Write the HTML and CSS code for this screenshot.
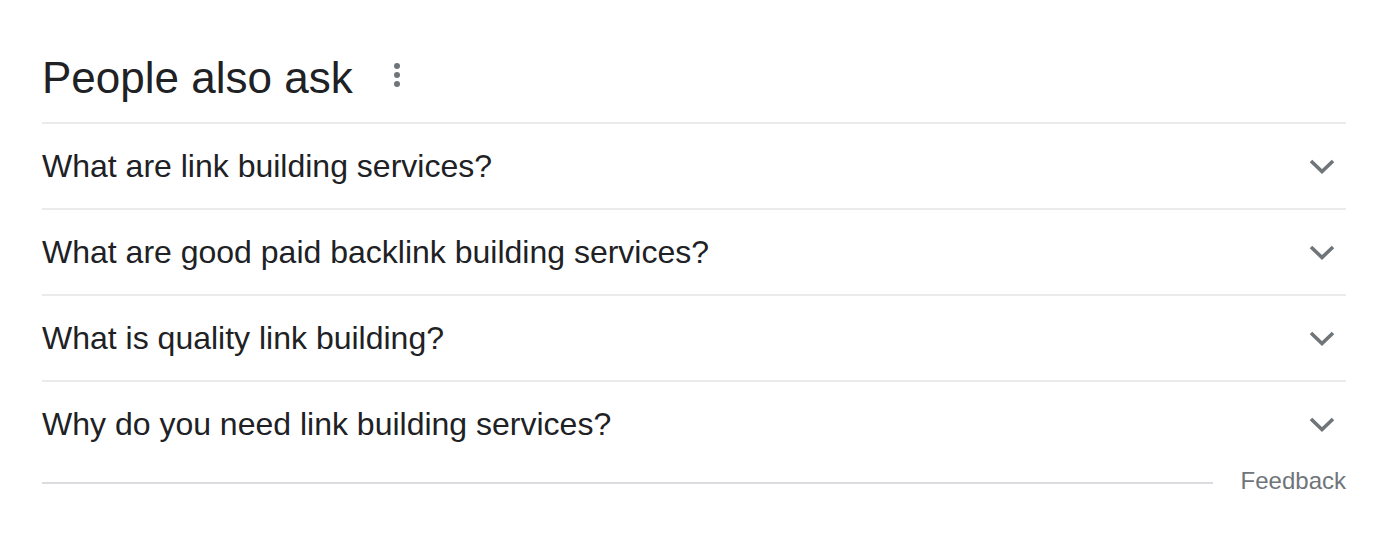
FILE: index.html
```html
<!DOCTYPE html>
<html>
<head>
<meta charset="utf-8">
<link rel="stylesheet" href="styles.css">
</head>
<body>
<div class="paa">
  <div class="paa-head">
    <h2 class="paa-title">People also ask</h2>
    <span class="paa-more" aria-label="More options">
      <svg width="12" height="30" viewBox="0 0 12 30"><circle cx="6" cy="5" r="3"/><circle cx="6" cy="14" r="3"/><circle cx="6" cy="23" r="3"/></svg>
    </span>
  </div>
  <div class="paa-list">
    <div class="paa-row"><span class="paa-q">What are link building services?</span><svg class="chev" width="28" height="18" viewBox="0 0 28 18"><path d="M3 4 L14 14.5 L25 4"/></svg></div>
    <div class="paa-row"><span class="paa-q">What are good paid backlink building services?</span><svg class="chev" width="28" height="18" viewBox="0 0 28 18"><path d="M3 4 L14 14.5 L25 4"/></svg></div>
    <div class="paa-row"><span class="paa-q">What is quality link building?</span><svg class="chev" width="28" height="18" viewBox="0 0 28 18"><path d="M3 4 L14 14.5 L25 4"/></svg></div>
    <div class="paa-row"><span class="paa-q">Why do you need link building services?</span><svg class="chev" width="28" height="18" viewBox="0 0 28 18"><path d="M3 4 L14 14.5 L25 4"/></svg></div>
  </div>
  <div class="paa-foot">
    <div class="foot-line"></div>
    <span class="feedback">Feedback</span>
  </div>
</div>
</body>
</html>
```
FILE: styles.css
```css
html, body {
  margin: 0;
  padding: 0;
  background: #fff;
}
body {
  font-family: "Liberation Sans", Arial, sans-serif;
  color: #202124;
}
.paa {
  width: 1304px;
  margin-left: 42px;
  padding-top: 43px;
}
.paa-head {
  display: flex;
  align-items: center;
  height: 70px;
  padding-bottom: 9px;
}
.paa-title {
  margin: 0;
  font-size: 44px;
  font-weight: 400;
  line-height: 52px;
  color: #202124;
}
.paa-more {
  display: flex;
  margin-left: 38px;
  margin-top: -4px;
}
.paa-more svg {
  fill: #70757a;
}
.paa-list {
  display: flex;
  flex-direction: column;
}
.paa-row {
  display: flex;
  align-items: center;
  justify-content: space-between;
  height: 84px;
  border-top: 2px solid #ebebeb;
}
.paa-q {
  font-size: 32px;
  line-height: 40px;
  color: #202124;
}
.chev {
  margin-right: 10px;
  margin-top: 0;
}
.chev path {
  fill: none;
  stroke: #70757a;
  stroke-width: 3.6;
}
.paa-foot {
  display: flex;
  align-items: center;
  height: 30px;
}
.foot-line {
  flex: 1;
  height: 2px;
  background: #dadce0;
  margin-right: 28px;
  margin-top: 4px;
}
.feedback {
  font-size: 24px;
  line-height: 30px;
  color: #70757a;
}
```
